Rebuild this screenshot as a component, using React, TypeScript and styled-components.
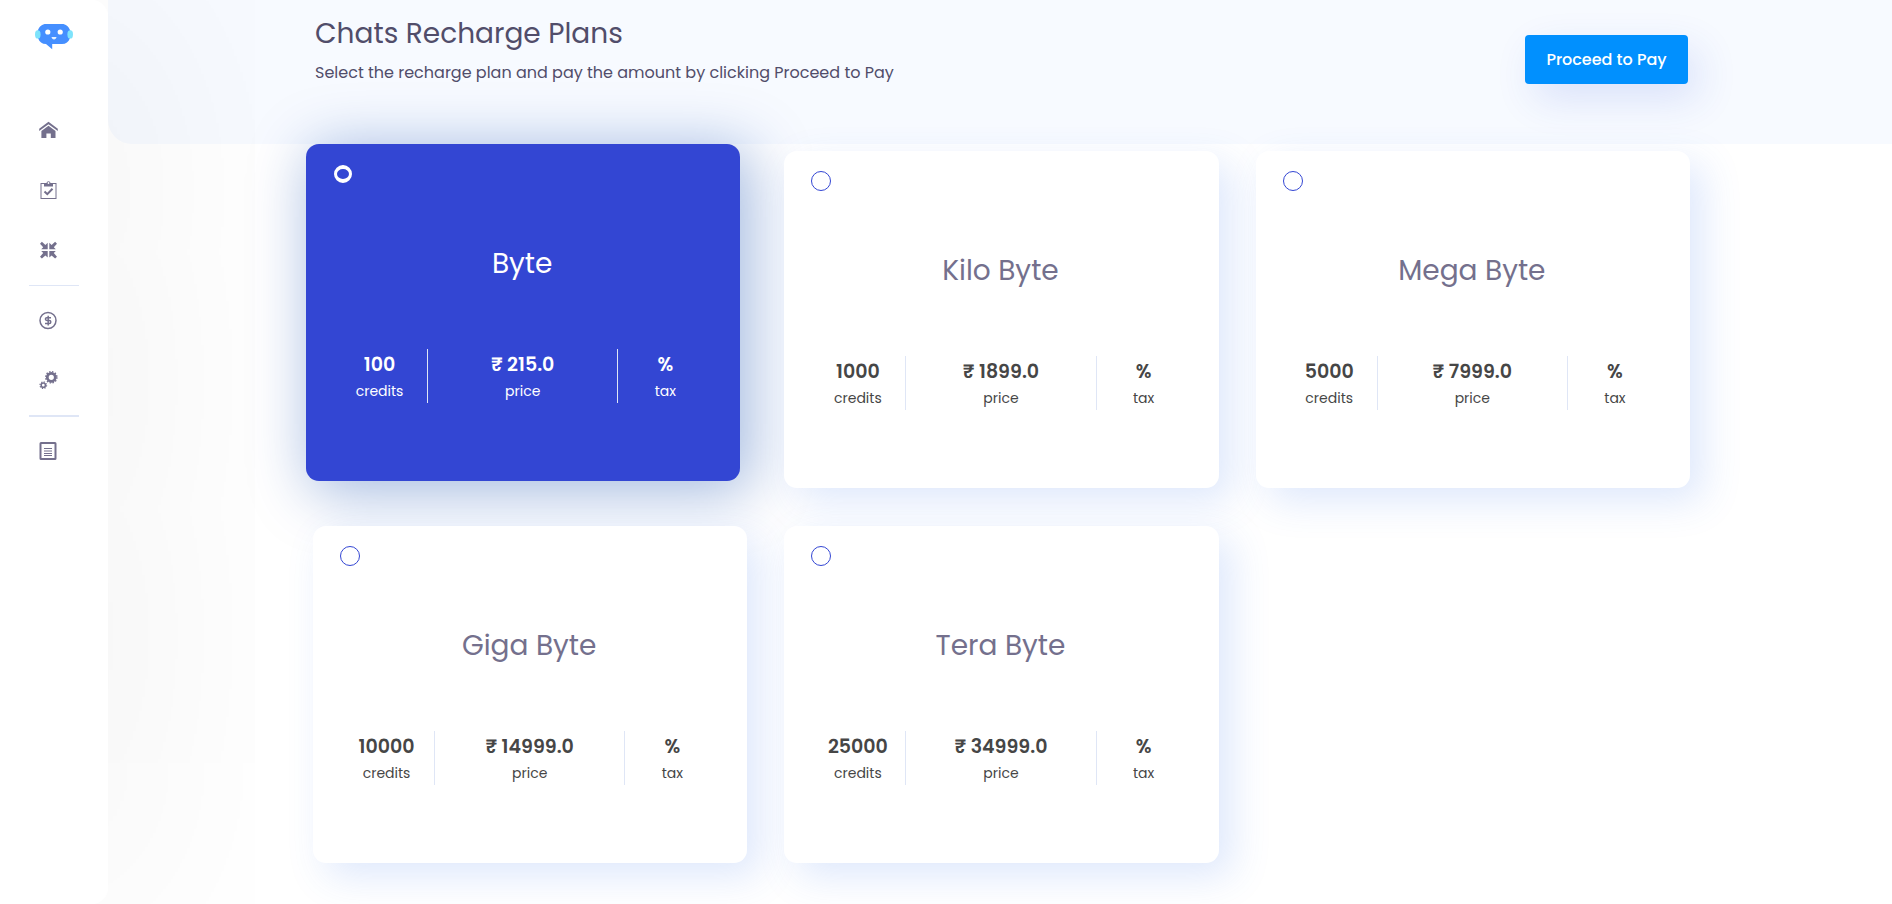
import React, { useState } from "react";
import styled, { createGlobalStyle } from "styled-components";

const colors = {
  primary: "#3346d3",
  action: "#0190fe",
  heading: "#514d6a",
  muted: "#74708d",
  text: "#464646",
  line: "#dfe6f6",
  band: "#f7faff",
};

const GlobalStyle = createGlobalStyle`
  *, *::before, *::after { box-sizing: border-box; }
  body {
    margin: 0;
    background: #fff;
    color: ${colors.text};
    font-family: Poppins, Inter, "Liberation Sans", sans-serif;
  }
`;

const Shell = styled.div`
  display: flex;
  align-items: stretch;
  min-height: 100vh;
`;

const Sidebar = styled.aside`
  position: sticky;
  top: 0;
  z-index: 2;
  flex: 0 0 108px;
  height: 100vh;
  display: flex;
  flex-direction: column;
  background: #fff;
  border-radius: 0 16px 16px 0;
  box-shadow: 0 0 250px rgba(0, 0, 0, 0.09);
`;

const Brand = styled.a`
  display: flex;
  justify-content: center;
  align-items: flex-start;
  height: 100px;
  padding-top: 22px;
`;

const Nav = styled.nav`
  display: flex;
  flex-direction: column;
`;

const NavLink = styled.a`
  display: flex;
  justify-content: center;
  align-items: center;
  height: 60px;
  padding-right: 12px;
  color: ${colors.muted};
`;

const NavDivider = styled.hr<{ $thick?: boolean }>`
  width: 50px;
  height: ${(p) => (p.$thick ? 2 : 1)}px;
  margin: 5px auto 4px;
  border: 0;
  background: ${colors.line};
`;

const Main = styled.main`
  flex: 1;
  min-width: 0;
`;

const Band = styled.header`
  height: 144px;
  padding: 0 24px 0 27px;
  background: ${colors.band};
  border-bottom-left-radius: 24px;
`;

const BandInner = styled.div`
  display: flex;
  justify-content: space-between;
  align-items: flex-start;
  max-width: 1377px;
  margin: 0 auto;
`;

const Intro = styled.div`
  padding: 12px 0 0 2px;
`;

const Title = styled.h1`
  margin: 0;
  color: ${colors.heading};
  font-size: 28px;
  font-weight: 400;
  line-height: 44px;
`;

const Subtitle = styled.p`
  margin: 4px 0 0;
  color: ${colors.heading};
  font-size: 16px;
  line-height: 26px;
`;

const PayButton = styled.button`
  width: 163px;
  height: 49px;
  margin: 35px 2px 0 0;
  padding: 0;
  border: 0;
  border-radius: 4px;
  background: ${colors.action};
  box-shadow: 10px 15px 40px rgba(40, 80, 220, 0.14);
  color: #fff;
  font: inherit;
  font-size: 16px;
  font-weight: 500;
  cursor: pointer;
`;

const Content = styled.form`
  padding: 7px 24px 41px 27px;
`;

const PlanGrid = styled.div`
  display: grid;
  grid-template-columns: repeat(3, minmax(0, 1fr));
  gap: 38px 37px;
  max-width: 1377px;
  margin: 0 auto;

  @media (max-width: 1100px) {
    grid-template-columns: repeat(auto-fill, minmax(320px, 1fr));
  }
`;

const PlanCard = styled.label<{ $selected: boolean }>`
  display: flex;
  flex-direction: column;
  min-height: 337px;
  padding: 20px 28px 20px 26px;
  border-radius: 13px;
  cursor: pointer;
  color: ${(p) => (p.$selected ? "#fff" : colors.text)};
  background: ${(p) => (p.$selected ? colors.primary : "#fff")};
  box-shadow: ${(p) =>
    p.$selected
      ? "8px 8px 60px 4px rgba(0, 64, 170, 0.36)"
      : "13px 13px 38px rgba(60, 120, 240, 0.17)"};
  transform: ${(p) => (p.$selected ? "translate(-7px, -7px)" : "translate(0, 0)")};
`;

const PlanRadio = styled.input`
  appearance: none;
  width: 20px;
  height: 20px;
  margin: 0 1px;
  border: 1px solid ${colors.primary};
  border-radius: 50%;
  background: transparent;
  cursor: pointer;

  &:checked {
    width: 18px;
    height: 18px;
    margin: 1px 2px;
    border: solid #fff;
    border-width: 4px 3px;
  }
`;

const PlanName = styled.span<{ $selected: boolean }>`
  margin-top: 56px;
  text-align: center;
  font-size: 28px;
  line-height: 48px;
  color: ${(p) => (p.$selected ? "#fff" : colors.muted)};
`;

const Stats = styled.span`
  display: grid;
  grid-template-columns: 1fr 2fr 1fr;
  margin-top: 61px;
`;

const Stat = styled.span`
  display: flex;
  flex-direction: column;
  align-items: center;
  height: 54px;
  padding-top: 1px;

  & + & {
    border-left: 1px solid ${colors.line};
  }
`;

const StatValue = styled.strong`
  font-size: 19px;
  font-weight: 600;
  line-height: 29px;
  white-space: nowrap;
`;

const StatLabel = styled.span`
  font-size: 14px;
  line-height: 24px;
`;

const Logo = () => (
  <svg width="40" height="28" viewBox="34 22 40 28" aria-hidden="true">
    <path
      d="M46 24h16c4 0 6.500 2.500 8 6 1.200 3 1.200 5.500 0 8-1.500 4-4 6-8 6H52.200v5.200L46 44c-4 0-6.500-2-8-6-1.200-2.500-1.200-5 0-8 1.500-3.500 4-6 8-6z"
      fill="#458fff"
    />
    <ellipse cx="37.800" cy="34.400" rx="2.800" ry="4.200" fill="#7ee3fb" />
    <ellipse cx="70.200" cy="34.400" rx="2.800" ry="4.200" fill="#7ee3fb" />
    <circle cx="47.800" cy="32" r="2.600" fill="#fff" />
    <circle cx="60.200" cy="32" r="2.600" fill="#fff" />
    <path d="M51.500 37h5c-.3 3.300-4.700 3.300-5 0z" fill="#e6f2ff" />
  </svg>
);

const HomeIcon = () => (
  <svg width="20" height="20" viewBox="38 120 20 20" fill="currentColor" aria-hidden="true">
    <path d="M48.500 121.800l9.300 6.900v2.400l-9.300-6.900-9.300 6.900v-2.400z" />
    <path d="M48.500 125.800l7 5.200v7h-4.700v-4.600h-4.400v4.600h-5v-7z" />
  </svg>
);

const ClipboardIcon = () => (
  <svg width="20" height="20" viewBox="38 180 20 20" fill="none" stroke="currentColor" aria-hidden="true">
    <rect x="41" y="183.500" width="15" height="15" />
    <path d="M44 183.500h2.500c0-3 4-3 4 0H53v3h-9z" fill="currentColor" stroke="none" />
    <circle cx="48.500" cy="183" r="0.900" fill="#fff" stroke="none" />
    <path d="M44.500 191.500l2.800 2.700 5.200-5.400" strokeWidth="2" />
  </svg>
);

const CompressIcon = () => (
  <svg width="20" height="20" viewBox="0 0 20 20" fill="currentColor" aria-hidden="true">
    <path d="M9.700 9.300H3.200L5.200 7.300 2 3.700 3.900 1.800 7.400 5 9.700 2.800z" />
    <path d="M11.300 9.300h6.500l-2-2L19 3.700l-1.900-1.900L13.600 5l-2.300-2.200z" />
    <path d="M9.700 11.100H3.200l2 2L2 16.700l1.900 1.900 3.500-3.200 2.300 2.200z" />
    <path d="M11.300 11.100h6.500l-2 2L19 16.700l-1.900 1.900-3.500-3.200-2.300 2.200z" />
  </svg>
);

const CoinIcon = () => (
  <svg width="20" height="20" viewBox="0 0 20 20" fill="none" stroke="currentColor" aria-hidden="true">
    <circle cx="10" cy="10.500" r="8" strokeWidth="1.500" />
    <path d="M13 7.700H8.900c-2 0-2 2.800 0 2.800h2.400c2 0 2 2.900 0 2.900H7" strokeWidth="1.500" />
    <path d="M10.200 5.700v9.800" strokeWidth="1.500" />
  </svg>
);

const GearsIcon = () => (
  <svg width="20" height="20" viewBox="38 370 20 20" fill="none" stroke="currentColor" aria-hidden="true">
    <circle cx="51.300" cy="377.300" r="4" strokeWidth="2.800" />
    <circle cx="51.300" cy="377.300" r="5.600" strokeWidth="1.400" strokeDasharray="1.500 1.432" />
    <circle cx="43.300" cy="385.200" r="2.100" strokeWidth="1.500" />
    <circle cx="43.300" cy="385.200" r="3.300" strokeWidth="1.200" strokeDasharray="1.300 1.292" />
  </svg>
);

const InvoiceIcon = () => (
  <svg width="20" height="20" viewBox="38 441 20 20" fill="none" stroke="currentColor" aria-hidden="true">
    <rect x="40.500" y="443" width="15" height="16" rx="0.500" strokeWidth="2" />
    <path d="M44 448.500h8M44 451h8M44 453.500h8M44 455.500h8" strokeWidth="1" />
  </svg>
);

const plans = [
  { id: "byte", name: "Byte", credits: "100", price: "215.0" },
  { id: "kilo", name: "Kilo Byte", credits: "1000", price: "1899.0" },
  { id: "mega", name: "Mega Byte", credits: "5000", price: "7999.0" },
  { id: "giga", name: "Giga Byte", credits: "10000", price: "14999.0" },
  { id: "tera", name: "Tera Byte", credits: "25000", price: "34999.0" },
];

export default function App() {
  const [selected, setSelected] = useState("byte");

  return (
    <>
      <GlobalStyle />
      <Shell>
        <Sidebar>
          <Brand href="#" aria-label="Dashboard">
            <Logo />
          </Brand>
          <Nav aria-label="Main">
            <NavLink href="#home" aria-label="Home"><HomeIcon /></NavLink>
            <NavLink href="#tasks" aria-label="Tasks"><ClipboardIcon /></NavLink>
            <NavLink href="#integrations" aria-label="Integrations"><CompressIcon /></NavLink>
            <NavDivider />
            <NavLink href="#billing" aria-label="Billing"><CoinIcon /></NavLink>
            <NavLink href="#settings" aria-label="Settings"><GearsIcon /></NavLink>
            <NavDivider $thick />
            <NavLink href="#invoices" aria-label="Invoices"><InvoiceIcon /></NavLink>
          </Nav>
        </Sidebar>
        <Main>
          <Band>
            <BandInner>
              <Intro>
                <Title>Chats Recharge Plans</Title>
                <Subtitle>Select the recharge plan and pay the amount by clicking Proceed to Pay</Subtitle>
              </Intro>
              <PayButton type="submit" form="plans">Proceed to Pay</PayButton>
            </BandInner>
          </Band>
          <Content id="plans" onSubmit={(e) => e.preventDefault()}>
            <PlanGrid role="radiogroup" aria-label="Recharge plans">
              {plans.map((plan) => {
                const isSelected = plan.id === selected;
                return (
                  <PlanCard key={plan.id} $selected={isSelected}>
                    <PlanRadio
                      type="radio"
                      name="plan"
                      value={plan.id}
                      checked={isSelected}
                      onChange={() => setSelected(plan.id)}
                    />
                    <PlanName $selected={isSelected}>{plan.name}</PlanName>
                    <Stats>
                      <Stat>
                        <StatValue>{plan.credits}</StatValue>
                        <StatLabel>credits</StatLabel>
                      </Stat>
                      <Stat>
                        <StatValue>₹ {plan.price}</StatValue>
                        <StatLabel>price</StatLabel>
                      </Stat>
                      <Stat>
                        <StatValue>%</StatValue>
                        <StatLabel>tax</StatLabel>
                      </Stat>
                    </Stats>
                  </PlanCard>
                );
              })}
            </PlanGrid>
          </Content>
        </Main>
      </Shell>
    </>
  );
}
